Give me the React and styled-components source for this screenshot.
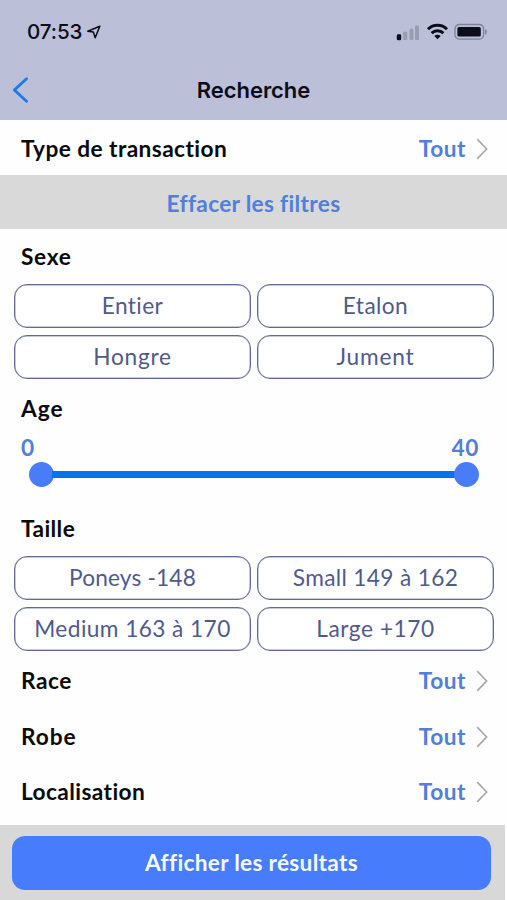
import React from 'react';
import styled, { createGlobalStyle } from 'styled-components';

const GlobalStyle = createGlobalStyle`
  * { box-sizing: border-box; }
  body { margin: 0; background: #fff; }
  button { font: inherit; border: 0; margin: 0; padding: 0; background: none; }
`;

const Screen = styled.div`
  width: 507px;
  height: 900px;
  overflow: hidden;
  display: flex;
  flex-direction: column;
  background: #fefefe;
  font-family: Lato, 'Open Sans', sans-serif;
  font-size: 22.7px;
  line-height: 30px;
  color: #0b0b0d;
  white-space: nowrap;
  font-variant-ligatures: none;
`;

const Header = styled.header`
  height: 120px;
  flex: none;
  background: #bbc0d8;
  font-family: Inter, sans-serif;
  color: #0b0d18;
`;

const StatusBar = styled.div`
  height: 62px;
  padding: 2px 19px 0 27px;
  display: flex;
  align-items: center;
  justify-content: space-between;
`;

const Clock = styled.div`
  display: flex;
  align-items: center;
  gap: 5px;
  font-size: 20.6px;
  font-weight: 550;
  letter-spacing: -0.1px;
`;

const StatusIcons = styled.div`
  display: flex;
  align-items: center;
`;

const NavBar = styled.div`
  height: 56px;
  display: grid;
  grid-template-columns: 60px 1fr 60px;
  align-items: center;
`;

const BackButton = styled.button`
  display: flex;
  padding-left: 11px;
`;

const Title = styled.h1`
  margin: 0;
  text-align: center;
  font-size: 22px;
  font-weight: 580;
  letter-spacing: -0.05px;
`;

const Row = styled.div`
  flex: none;
  height: ${(p) => p.$height}px;
  padding: ${(p) => p.$top ?? 1}px 18px ${(p) => p.$bottom || 0}px 21px;
  display: flex;
  align-items: center;
  justify-content: space-between;
`;

const Label = styled.span`
  font-weight: 700;
  letter-spacing: ${(p) => p.$track || 0}px;
`;

const Picker = styled.button`
  display: flex;
  align-items: center;
  gap: 10px;
  color: #507fdc;
  font-weight: 700;
  letter-spacing: 0.5px;
`;

const ClearBar = styled.button`
  flex: none;
  height: 54px;
  padding-top: 3px;
  background: #d9d9d9;
  color: #507fdc;
  font-weight: 700;
  letter-spacing: 0.3px;
`;

const Options = styled.div`
  flex: none;
  display: grid;
  grid-template-columns: 237px 237px;
  grid-auto-rows: 44px;
  gap: 7px 6px;
  padding-left: 14px;
`;

const Option = styled.button`
  border: 1px solid #626b94;
  box-shadow: inset 0 0 0 0.5px #8f96b3;
  border-radius: 13px;
  background: #fff;
  color: #515a8c;
  font-weight: 400;
  text-align: center;
  letter-spacing: ${(p) => p.$track || 0}px;
`;

const AgeRange = styled.div`
  flex: none;
  height: 68px;
  padding: 0 28px 0 21px;
`;

const RangeValues = styled.div`
  display: flex;
  justify-content: space-between;
  height: 26px;
  line-height: 23px;
  color: #507fdc;
  font-weight: 700;
  letter-spacing: 0.6px;
`;

const Slider = styled.div`
  display: flex;
  align-items: center;
  height: 25px;
  margin-left: 8px;
`;

const Thumb = styled.span`
  flex: none;
  width: 25px;
  height: 25px;
  border-radius: 50%;
  background: #487cfb;
`;

const Track = styled.span`
  flex: 1;
  height: 7px;
  margin: 0 -2px;
  background: #0873e8;
`;

const Footer = styled.footer`
  flex: none;
  width: 505px;
  height: 75px;
  margin-top: auto;
  padding: 11px 14px 0 12px;
  background: #d8d8d8;
`;

const Submit = styled.button`
  width: 100%;
  height: 54px;
  border-radius: 13px;
  background: #477dfd;
  color: #f4f8ff;
  font-weight: 700;
  letter-spacing: 0.28px;
`;

const LocationArrow = () => (
  <svg width="15" height="15" viewBox="0 0 15 15" fill="none" stroke="#0b0d18" strokeWidth="1.5" strokeLinejoin="round">
    <path d="M12.8 1.2 L0.8 6.2 L6.3 7 L8.2 12.8 Z" />
  </svg>
);

const Signal = () => (
  <svg width="24" height="18" viewBox="0 0 24 18">
    <rect x="1.8" y="11.3" width="4.4" height="6" rx="1.4" fill="#0b0d18" />
    <rect x="8.2" y="8.8" width="4" height="8.2" rx="1" fill="#989db2" />
    <rect x="14.4" y="5.8" width="4" height="11.2" rx="1" fill="#989db2" />
    <rect x="20" y="2.6" width="4" height="14.4" rx="1" fill="#989db2" />
  </svg>
);

const WifiIcon = styled.svg`
  margin-left: 7px;
`;

const Wifi = () => (
  <WifiIcon width="22" height="18" viewBox="0 0 22 18" fill="none" stroke="#0b0d18" strokeWidth="2.9">
    <path d="M2 6.2 C7.2 1 15.8 1 21 6.2" />
    <path d="M5.6 10.1 C8.9 6.9 14.1 6.9 17.4 10.1" />
    <path d="M11.5 16.2 L8.3 12.9 C10.1 11.2 12.9 11.2 14.7 12.9 Z" fill="#0b0d18" stroke="none" />
  </WifiIcon>
);

const BatteryIcon = styled.svg`
  margin-left: 6px;
`;

const Battery = () => (
  <BatteryIcon width="34" height="18" viewBox="0 0 34 18">
    <rect x="1" y="1.5" width="28.6" height="14.6" rx="4.2" fill="none" stroke="#7d8296" strokeWidth="1.3" />
    <rect x="3.4" y="4" width="23.4" height="9.6" rx="1.6" fill="#0b0d18" />
    <path d="M31 6 C33.3 6.8 33.3 10.8 31 11.6 Z" fill="#7d8296" />
  </BatteryIcon>
);

const Chevron = () => (
  <svg width="13" height="22" viewBox="0 0 13 22" fill="none" stroke="#a9a9a9" strokeWidth="1.7">
    <path d="M1.2 1.2 L10.6 11 L1.2 20.8" />
  </svg>
);

const PickerRow = ({ label, height, track, top }) => (
  <Row $height={height} $top={top}>
    <Label $track={track}>{label}</Label>
    <Picker>Tout<Chevron /></Picker>
  </Row>
);

const sexes = [['Entier', 0.4], ['Etalon', 0.4], ['Hongre', 0.7], ['Jument', 0.8]];
const sizes = [['Poneys -148', 0.15], ['Small 149 à 162', 0.33], ['Medium 163 à 170', 0.42], ['Large +170', 0.55]];

const OptionGroup = ({ items }) => (
  <Options>
    {items.map(([name, track]) => <Option key={name} $track={track}>{name}</Option>)}
  </Options>
);

export default function App() {
  return (
    <Screen>
      <GlobalStyle />
      <Header>
        <StatusBar>
          <Clock>07:53<LocationArrow /></Clock>
          <StatusIcons><Signal /><Wifi /><Battery /></StatusIcons>
        </StatusBar>
        <NavBar>
          <BackButton aria-label="Retour">
            <svg width="18" height="28" viewBox="0 0 18 28" fill="none" stroke="#1c79e8" strokeWidth="2.9" strokeLinecap="round" strokeLinejoin="round">
              <path d="M15.5 2.8 L3.4 14 L15.5 25.2" />
            </svg>
          </BackButton>
          <Title>Recherche</Title>
        </NavBar>
      </Header>
      <PickerRow label="Type de transaction" height={55} top={2} track={0.42} />
      <ClearBar>Effacer les filtres</ClearBar>
      <Row $height={55}><Label $track={0.7}>Sexe</Label></Row>
      <OptionGroup items={sexes} />
      <Row $height={57} $top={2}><Label $track={1}>Age</Label></Row>
      <AgeRange>
        <RangeValues><span>0</span><span>40</span></RangeValues>
        <Slider><Thumb /><Track /><Thumb /></Slider>
      </AgeRange>
      <Row $height={52} $top={0} $bottom={2}><Label $track={0.4}>Taille</Label></Row>
      <OptionGroup items={sizes} />
      <PickerRow label="Race" height={57} top={3} track={0.5} />
      <PickerRow label="Robe" height={55} top={2} track={0.9} />
      <PickerRow label="Localisation" height={55} top={2} track={0.4} />
      <Footer><Submit>Afficher les résultats</Submit></Footer>
    </Screen>
  );
}
